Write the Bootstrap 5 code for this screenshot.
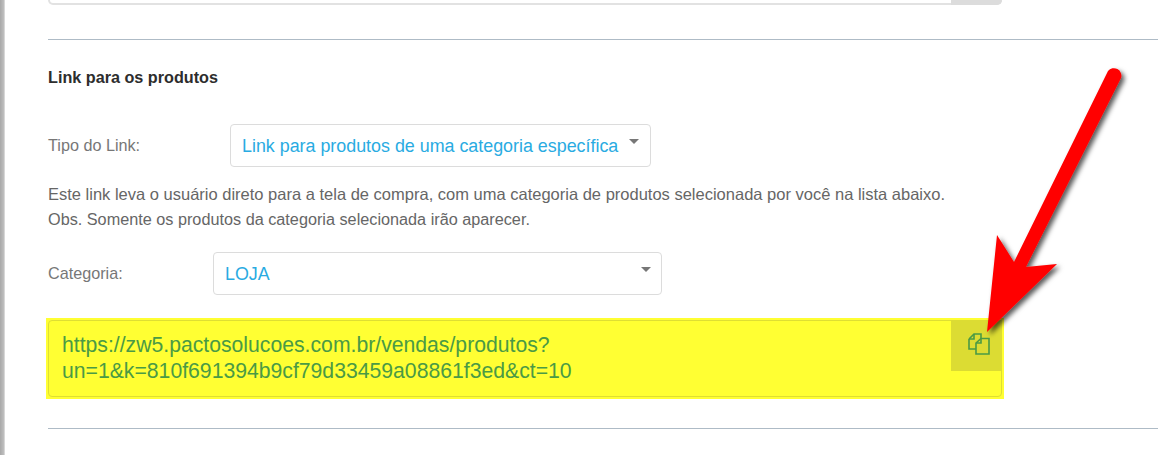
<!DOCTYPE html>
<html lang="pt-BR">
<head>
  <meta charset="UTF-8" />
  <meta name="viewport" content="width=device-width, initial-scale=1">
  <title>Link para os produtos</title>
  <link href="https://cdn.jsdelivr.net/npm/bootstrap@5.3.3/dist/css/bootstrap.min.css" rel="stylesheet">
  <style>
    html, body { height: 455px; overflow: hidden; }
    body { font-family: "Liberation Sans", Arial, sans-serif; background: #fff; }
    .page-edge { width: 5px; height: 455px; flex: none; background: linear-gradient(to right, #a8a8a8, #bdbdbd 70%, #e4e4e4); }
    .page-main { flex: 1; padding: 0 0 0 43px; min-width: 0; }
    .top-field { width: 954px; height: 5px; border: 2px solid #e2e2e2; border-top: 0; border-radius: 0 0 5px 5px; }
    .top-field-btn { width: 51px; height: 5px; margin-left: auto; margin-right: -2px; background: #dcdcdc; border-radius: 0 0 5px 0; }
    .rule { height: 1px; background: #aebbc6; }
    .rule-top { margin-top: 34px; }
    .rule-bottom { margin-top: 29px; }
    .section-title { font-size: 16.2px; font-weight: 700; color: #2d2d2d; line-height: 20px; margin: 27px 0 0; }
    .field-label { font-size: 16.2px; color: #777; line-height: 20px; margin-bottom: 2px; }
    .label-type { width: 182px; }
    .label-cat { width: 165px; }
    .row-type { margin-top: 37px; }
    .row-cat { margin-top: 20px; }
    .picker { height: 43px; border: 1px solid #dcdcdc; border-radius: 4px; color: #29abe2; font-size: 17.87px; padding: 1px 11px 0 11px; background: #fff; display: flex; align-items: center; justify-content: space-between; }
    .picker:hover, .picker:focus { color: #29abe2; border-color: #dcdcdc; background: #fff; }
    .picker::after { border: 0; margin: -9px 0 0; width: 0; height: 0; border-left: 5px solid transparent; border-right: 5px solid transparent; border-top: 5px solid #777; }
    .picker-type { width: 421px; }
    .picker-cat { width: 449px; padding-right: 10px; }
    .help-text { font-size: 16.5px; color: #666; line-height: 25px; margin: 15px 0 0; }
    .help-note { font-size: 16.24px; }
    .link-mark { width: 958px; height: 81px; margin: 23px 0 0 -2px; padding: 2px; background: #ffff33; }
    .link-box { height: 77px; width: 954px; border: 1px solid #dede33; border-radius: 4px; }
    .link-text { font-size: 21.2px; line-height: 26px; color: #4a9a45; padding: 11px 14px 0 13px; flex: 1; }
    .copy-btn { width: 51px; height: 51px; margin-top: -1px; margin-right: -1px; background: #dcdc33; flex: none; border: 0; padding: 0 0 4px 4px; }
    .arrow-over { position: absolute; left: 0; top: 0; pointer-events: none; }
  </style>
</head>
<body>
  <div class="d-flex">
    <div class="page-edge"></div>
    <div class="page-main">
      <div class="top-field"><div class="top-field-btn"></div></div>
      <div class="rule rule-top"></div>

      <h2 class="section-title">Link para os produtos</h2>

      <div class="d-flex align-items-center row-type">
        <label class="field-label label-type">Tipo do Link:</label>
        <button type="button" class="btn picker picker-type dropdown-toggle">Link para produtos de uma categoria específica</button>
      </div>

      <p class="help-text">Este link leva o usuário direto para a tela de compra, com uma categoria de produtos selecionada por você na lista abaixo.<br><span class="help-note">Obs. Somente os produtos da categoria selecionada irão aparecer.</span></p>

      <div class="d-flex align-items-center row-cat">
        <label class="field-label label-cat">Categoria:</label>
        <button type="button" class="btn picker picker-cat dropdown-toggle">LOJA</button>
      </div>

      <div class="link-mark">
        <div class="link-box d-flex align-items-start">
          <div class="link-text">https://zw5.pactosolucoes.com.br/vendas/produtos?<br>un=1&amp;k=810f691394b9cf79d33459a08861f3ed&amp;ct=10</div>
          <button type="button" class="copy-btn d-flex align-items-center justify-content-center" aria-label="Copiar">
            <svg width="22" height="22" viewBox="0 0 22 22" fill="none" stroke="#4a9a45" stroke-width="1.6">
              <path d="M1 6 L6 1 H13 V6"/>
              <path d="M1 6 V16 H8"/>
              <path d="M6 1 V6 H1"/>
              <path d="M8 10 L13 5.5 H21 V21 H8 Z" fill="#dcdc33"/>
              <path d="M13 5.5 V10 H8"/>
            </svg>
          </button>
        </div>
      </div>

      <div class="rule rule-bottom"></div>
    </div>
  </div>

  <svg class="arrow-over" width="1158" height="455" viewBox="0 0 1158 455">
    <defs>
      <filter id="arrowShadow" x="-20%" y="-20%" width="150%" height="150%">
        <feDropShadow dx="3" dy="3" stdDeviation="2.5" flood-color="#000" flood-opacity="0.65"/>
      </filter>
    </defs>
    <g filter="url(#arrowShadow)" fill="#ff0000">
      <path d="M997 235 L1014 262 L1108 71 A7.5 7.5 0 0 1 1121 78 L1026 267 L1057 264 L987 332 Z"/>
    </g>
  </svg>

  <script src="https://cdn.jsdelivr.net/npm/bootstrap@5.3.3/dist/js/bootstrap.bundle.min.js"></script>
</body>
</html>
